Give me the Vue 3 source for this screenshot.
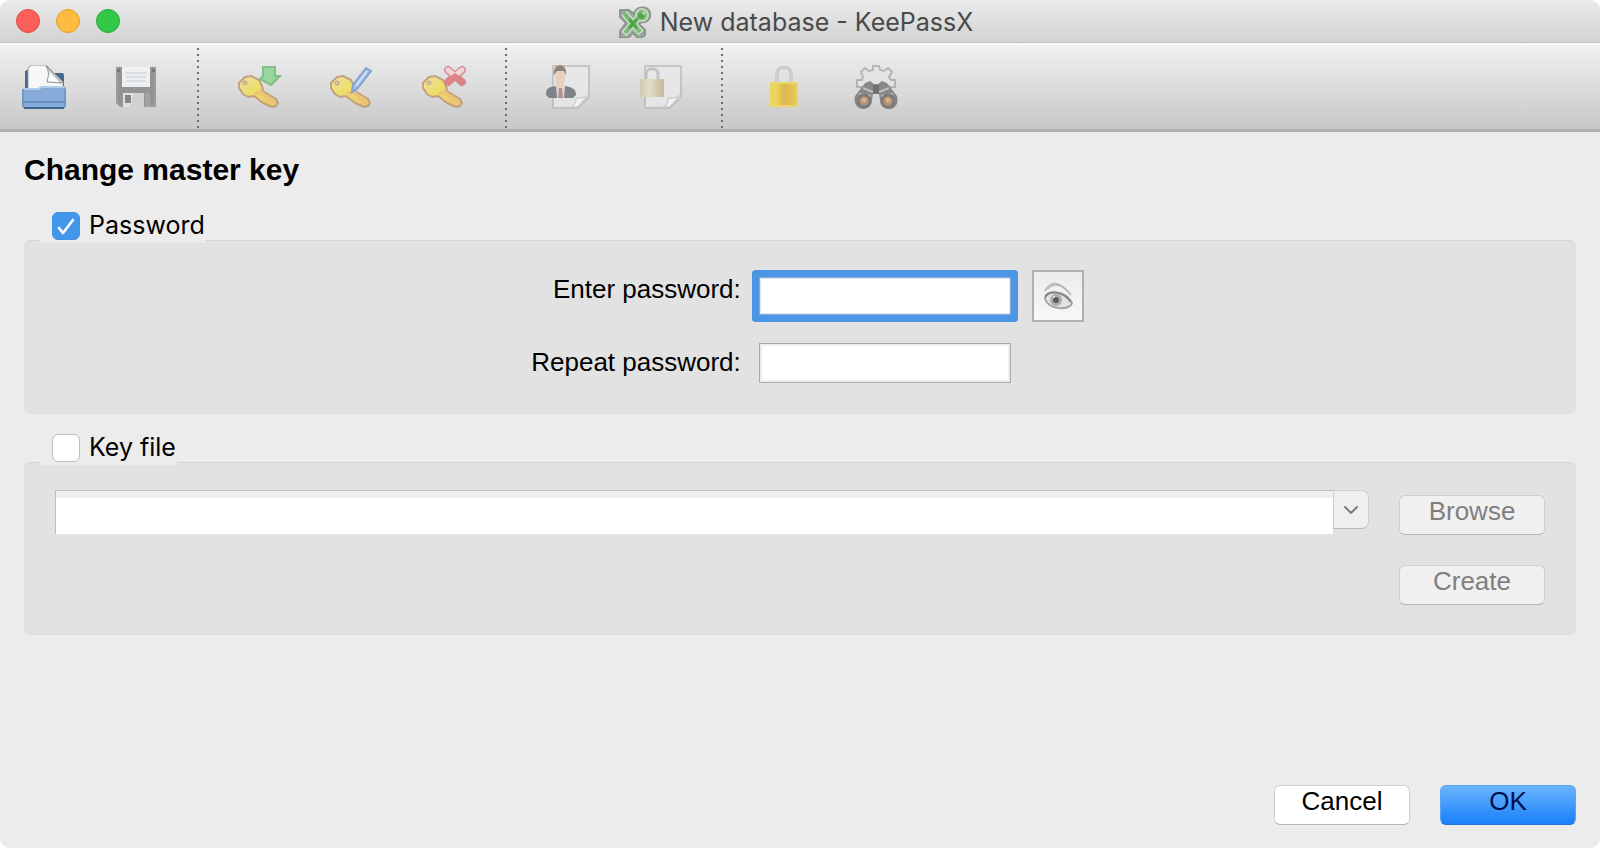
<template>
  <main class="window">
    <header class="titlebar">
      <div class="lights">
        <button
          v-for="light in lights"
          :key="light"
          type="button"
          :class="['light', light]"
          :aria-label="light"
        ></button>
      </div>
      <h1 class="title">
        <svg class="logo" viewBox="0 0 32 32" aria-hidden="true">
          <path
            d="M1 4h9l5 4c1-8 15-9 16-1 1 6-3 10-8 9l-3 2 6 6v5l-4 3h-3l-5-5-5 5H1v-7l6-8-6-6z"
            fill="#9aa99b"
            stroke="#8c968d"
            stroke-width="2"
            stroke-linejoin="round"
          />
          <path d="M5 7l17 20M5 28L21 10" stroke="#c6dec3" stroke-width="7" />
          <circle cx="23" cy="9" r="6" fill="#78b873" stroke="#c0dabd" stroke-width="2" />
          <path d="M5 7l16 19M6 27L20 11" stroke="#7cb877" stroke-width="4" />
          <path d="M10 13l8 9M10 22l8-9" stroke="#4fa548" stroke-width="3" />
          <circle cx="22" cy="10" r="3" fill="#4fa548" />
          <circle cx="25" cy="7" r="2" fill="#a9d2a5" />
        </svg>
        <span>New database - KeePassX</span>
      </h1>
    </header>

    <nav class="toolbar">
      <button type="button" class="tool" aria-label="Open database">
        <svg viewBox="0 0 44 44">
          <path d="M3 6l4-2v20H3zM30 8h11l1 2v14H30z" fill="#47698c" />
          <path d="M6 3l3-3h15l17 17v5H22l-5 3H6z" fill="#f7f7f7" stroke="#999" />
          <path d="M24 1c4 6 2 11 1 16l15 1z" fill="#dcdcdc" stroke="#8f9499" />
          <path d="M28 8l-2 8 11 1z" fill="#fff" />
          <path d="M0 25l2-2h15l2-2h23l2 2v18l-2 2H2l-2-2z" fill="#86abd9" />
          <path d="M1 24h16l2-2h23" stroke="#b2cdec" stroke-width="2" fill="none" />
          <path d="M0 37h44" stroke="#4a76ab" />
          <path d="M1 24v17l1 2h40l1-2V24" stroke="#5d85b8" fill="none" />
          <path d="M2 43h40" stroke="#3d6594" stroke-width="2" />
        </svg>
      </button>
      <button type="button" class="tool" aria-label="Save database" disabled>
        <svg viewBox="0 0 44 44">
          <path d="M2 2h40v40H6l-4-4z" fill="#939393" />
          <path d="M3 3v34l4 4h34V3" fill="none" stroke="#a5a5a5" />
          <path d="M8 2h28v20H8z" fill="#eff0f1" />
          <path d="M12 8h20M12 12h20M12 16h20" stroke="#c3ccd5" />
          <path d="M9 28h21v14H9z" fill="#e0e0e0" />
          <path d="M20 28h10v14H16z" fill="#d0d0d0" />
          <path d="M11 30h6v8h-6z" fill="#858585" />
          <path d="M3 4h3v3H3zM38 4h3v3h-3z" fill="#777" />
          <path d="M31 28h5v14h-5z" fill="#a3a3a3" />
        </svg>
      </button>
      <span class="separator"></span>

      <button
        v-for="action in keyActions"
        :key="action"
        type="button"
        class="tool faded"
        :aria-label="action + ' entry'"
        disabled
      >
        <svg viewBox="0 0 44 44">
          <path
            d="M1 18l6-6 6-1 8 4 3 6 1 5 13 8 2 4-2 3-4 1-9-4-9-7-6 1-5-3-4-6z"
            fill="url(#keyFill)"
            stroke="#bd9468"
            stroke-width="2"
            stroke-linejoin="round"
          />
          <path d="M17 29l6-2 13 10" fill="none" stroke="#f3bd5c" stroke-width="3" />
          <circle cx="7" cy="18" r="2" fill="#d9c795" stroke="#b3946c" />
          <path
            v-if="action === 'Add'"
            d="M25 2h12v9h5l-9 9-11-6 3-3z"
            fill="#85d48c"
            stroke="#6bb873"
            stroke-width="2"
          />
          <g v-else-if="action === 'Edit'">
            <path d="M36 3l5 3-14 18-5 3 1-7z" fill="#8fb6ec" stroke="#6f94cc" stroke-width="2" />
            <path d="M37 6L26 21" stroke="#cfe2fa" stroke-width="2" />
          </g>
          <g v-else>
            <path d="M26 5l14 12M40 5L26 17" stroke="#d2787f" stroke-width="8" stroke-linecap="round" />
            <path d="M26 5l5 4M40 5l-5 4" stroke="#f4d4d5" stroke-width="5" stroke-linecap="round" />
            <path d="M33 11l7 6M33 11l-7 6" stroke="#e06a70" stroke-width="5" stroke-linecap="round" />
          </g>
        </svg>
      </button>
      <span class="separator"></span>

      <button type="button" class="tool faded" aria-label="Copy username" disabled>
        <svg viewBox="0 0 44 44">
          <path d="M7 1h36v31L32 43H7z" fill="#e9e9e9" stroke="#bebebe" stroke-width="2" />
          <path d="M25 42c6-2 5-9 5-9s9 1 12-3L32 42z" fill="#f8f8f8" stroke="#bebebe" />
          <path d="M0 30c0-7 3-8 10-9h9c7 1 11 3 11 9l-3 3H3z" fill="#6a6e73" />
          <path d="M10 20h9l-1 13h-7z" fill="#ded9d7" />
          <path d="M13 23h3l1 10h-5z" fill="#b07c7c" />
          <path d="M9 8c0-6 11-6 11 0l-2 11-3 4h-2l-3-4z" fill="#e8cdb5" />
          <path d="M8 10c-2-13 14-13 12 0l-2-4h-7z" fill="#7d6b5a" />
        </svg>
      </button>
      <button type="button" class="tool faded" aria-label="Copy password" disabled>
        <svg viewBox="0 0 44 44">
          <path d="M7 1h36v31L32 43H7z" fill="#e9e9e9" stroke="#bebebe" stroke-width="2" />
          <path d="M25 42c6-2 5-9 5-9s9 1 12-3L32 42z" fill="#f8f8f8" stroke="#bebebe" />
          <path d="M8 15V9c0-7 12-7 12 0v6" fill="none" stroke="#bbb" stroke-width="3" />
          <path d="M2 14h24v18H2z" fill="url(#paleLock)" />
        </svg>
      </button>
      <span class="separator"></span>

      <button type="button" class="tool" aria-label="Lock databases" disabled>
        <svg viewBox="0 0 44 44">
          <path d="M15 18V9c0-9 14-9 14 0v9" fill="none" stroke="#bcbcbc" stroke-width="3" />
          <path d="M15 18V9c0-9 14-9 14 0v9" fill="none" stroke="#e0e0e0" />
          <rect x="8" y="17" width="28" height="25" rx="1" fill="url(#goldLock)" />
          <path d="M9 18h26v23H9z" fill="none" stroke="#ead765" stroke-width="2" />
        </svg>
      </button>
      <button type="button" class="tool faded" aria-label="Search" disabled>
        <svg viewBox="0 0 44 44">
          <path
            d="M19 1h6l1 4 4 1 4-3 4 4-3 5 2 3h4v7H3v-7h5l1-3-2-5 4-4 4 3 4-1z"
            fill="#e6e6e6"
            stroke="#aaa"
            stroke-width="2"
          />
          <path
            d="M11 18l5-2 4 3h4l4-3 5 2 10 13c2 8-2 13-8 13s-9-4-9-9l-1-6h-6l-1 6c0 5-4 9-9 9S-1 39 1 31z"
            fill="#747474"
          />
          <path d="M9 23l10 4M25 27l10-4M5 29l12 2M27 31l12-2" stroke="#b8b8b8" stroke-width="2" />
          <path d="M19 20h6v9h-6z" fill="#555" />
          <circle cx="10" cy="36" r="6" fill="#b9855a" stroke="#666" stroke-width="3" />
          <circle cx="34" cy="36" r="6" fill="#b9855a" stroke="#666" stroke-width="3" />
          <circle cx="10" cy="35" r="2" fill="#ddb084" />
          <circle cx="34" cy="35" r="2" fill="#ddb084" />
        </svg>
      </button>

      <!-- fills shared by the toolbar icons -->
      <svg class="defs" aria-hidden="true">
        <defs>
          <linearGradient id="keyFill" x1="0" y1="0" x2="1" y2="1">
            <stop offset="0" stop-color="#f3dfa0" />
            <stop offset="0.4" stop-color="#f3e050" />
            <stop offset="1" stop-color="#edba62" />
          </linearGradient>
          <linearGradient id="paleLock">
            <stop offset="0" stop-color="#d2c7a5" />
            <stop offset="0.4" stop-color="#e4dcc4" />
            <stop offset="1" stop-color="#c2b28a" />
          </linearGradient>
          <linearGradient id="goldLock">
            <stop offset="0" stop-color="#ead65e" />
            <stop offset="0.2" stop-color="#ecd65a" />
            <stop offset="0.5" stop-color="#ddb955" />
            <stop offset="1" stop-color="#e8cb50" />
          </linearGradient>
        </defs>
      </svg>
    </nav>

    <form class="content" @submit.prevent>
      <h2 class="heading">Change master key</h2>

      <section class="group">
        <label class="legend">
          <input v-model="usePassword" type="checkbox" />
          <span>Password</span>
        </label>
        <div class="box passwords">
          <label for="password">Enter password:</label>
          <input
            id="password"
            v-model="password"
            class="field active"
            :type="showPassword ? 'text' : 'password'"
          />
          <button
            type="button"
            class="reveal"
            aria-label="Show password"
            @click="showPassword = !showPassword"
          >
            <svg viewBox="0 0 30 28">
              <path d="M2 9C8-1 16-2 28 13" fill="none" stroke="#bbb" stroke-width="2" />
              <path d="M5 7c7-7 13-4 20 3" fill="none" stroke="#aaa" />
              <path
                d="M2 17c0-9 20-10 27 4-2 8-23 7-27-4z"
                fill="#e3e3e3"
                stroke="#a5a5a5"
                stroke-width="2"
              />
              <path d="M2 15c4-7 18-6 26 5" fill="none" stroke="#888" stroke-width="2" />
              <circle cx="13" cy="18" r="6" fill="#adadad" />
              <circle cx="13" cy="18" r="3" fill="#5c5c5c" />
              <circle cx="11" cy="15" r="1" fill="#eee" />
            </svg>
          </button>
          <label for="repeat">Repeat password:</label>
          <input
            id="repeat"
            v-model="repeat"
            class="field"
            :type="showPassword ? 'text' : 'password'"
          />
        </div>
      </section>

      <section class="group">
        <label class="legend">
          <input v-model="useKeyFile" type="checkbox" />
          <span>Key file</span>
        </label>
        <div class="box keyfile">
          <div class="combo">
            <input v-model="keyFile" type="text" aria-label="Key file path" :disabled="!useKeyFile" />
            <button type="button" aria-label="Recent key files" :disabled="!useKeyFile">
              <svg viewBox="0 0 16 10">
                <path
                  d="M2 2l6 6 6-6"
                  fill="none"
                  stroke="#7c7c7c"
                  stroke-width="2"
                  stroke-linecap="round"
                  stroke-linejoin="round"
                />
              </svg>
            </button>
          </div>
          <div class="actions">
            <button type="button" class="push" :disabled="!useKeyFile">Browse</button>
            <button type="button" class="push" :disabled="!useKeyFile">Create</button>
          </div>
        </div>
      </section>

      <footer class="footer">
        <button type="button" class="push">Cancel</button>
        <button type="submit" class="push primary">OK</button>
      </footer>
    </form>
  </main>
</template>

<script setup>
import { ref } from "vue";

const lights = ["close", "minimize", "zoom"];
const keyActions = ["Add", "Edit", "Delete"];

// master key form
const usePassword = ref(true);
const useKeyFile = ref(false);
const password = ref("");
const repeat = ref("");
const keyFile = ref("");
const showPassword = ref(false);
</script>

<style>
body {
  background: #fff;
}
</style>

<style scoped>
* {
  box-sizing: border-box;
}

.window {
  display: flex;
  flex-direction: column;
  min-height: 100vh;
  border-radius: 10px;
  overflow: hidden;
  background: #ececec;
  color: #000;
  font-family: "Liberation Sans", Arial, sans-serif;
  font-size: 26px;
}

button,
input {
  margin: 0;
  padding: 0;
  font: inherit;
  outline: none;
}

/* title bar */
.titlebar {
  display: grid;
  grid-template-columns: 1fr auto 1fr;
  align-items: center;
  height: 43px;
  padding: 0 16px;
  background: linear-gradient(#ebebeb, #d3d3d3);
  border-bottom: 1px solid #c0c0c0;
}

.lights {
  display: flex;
  gap: 16px;
}

.light {
  width: 24px;
  height: 24px;
  border: 1px solid #e14942;
  border-radius: 50%;
  background: #fc605c;
}

.light.minimize {
  background: #fdbc40;
  border-color: #dfa023;
}

.light.zoom {
  background: #34c84a;
  border-color: #27aa35;
}

.title {
  display: flex;
  align-items: center;
  gap: 9px;
  margin: 0;
  padding: 2px 8px 0 0;
  color: #4a4a4a;
  font-family: Inter, sans-serif;
  font-size: 25px;
  font-weight: 400;
}

.logo {
  width: 32px;
  height: 32px;
}

/* toolbar */
.toolbar {
  display: flex;
  align-items: center;
  gap: 4px;
  height: 89px;
  background: linear-gradient(#f0f0f0, #c8c8c8);
  border-top: 2px solid #fafafa;
  border-bottom: 3px solid #b0b0b0;
}

.tool {
  display: flex;
  justify-content: center;
  width: 88px;
  border: 0;
  background: none;
}

.tool svg {
  width: 44px;
  height: 44px;
}

.tool.faded svg {
  opacity: 0.8;
}

.separator {
  display: flex;
  align-self: stretch;
  justify-content: center;
  width: 28px;
  padding-top: 3px;
}

.separator::before {
  content: "";
  width: 2px;
  background: repeating-linear-gradient(#6e6e6e 0 2px, transparent 2px 6px);
}

.defs {
  width: 0;
  height: 0;
}

/* form */
.content {
  display: flex;
  flex: 1;
  flex-direction: column;
  padding: 20px 24px 23px;
}

.heading {
  margin: 0 0 4px;
  font-size: 30px;
  line-height: 36px;
}

.group {
  display: flex;
  flex-direction: column;
  margin-top: 17px;
}

.legend {
  display: flex;
  z-index: 1;
  align-items: center;
  align-self: flex-start;
  gap: 9px;
  height: 34px;
  margin: 0 0 -3px 16px;
  padding: 0 1px 0 12px;
  background: #ececec;
  font-family: Inter, sans-serif;
  font-size: 25px;
}

.legend span {
  padding-bottom: 2px;
}

.legend input {
  width: 28px;
  height: 28px;
  appearance: none;
  background: #fff;
  border: 1px solid #bdbdbd;
  border-radius: 6px;
}

.legend input:checked {
  background: #4297ea
    url('data:image/svg+xml,<svg xmlns="http://www.w3.org/2000/svg" viewBox="0 0 26 26"><path d="M6 15l4 5L20 7" fill="none" stroke="white" stroke-width="2.6" stroke-linecap="round" stroke-linejoin="round"/></svg>');
  border-color: #3f92e4;
}

.box {
  background: #e2e2e2;
  border: 1px solid #dedede;
  border-top-color: #d4d4d4;
  border-radius: 7px;
}

.passwords {
  display: grid;
  grid-template-columns: auto 252px 52px;
  justify-content: center;
  align-items: center;
  column-gap: 18px;
  row-gap: 21px;
  padding: 29px 0 30px 12px;
}

.passwords label {
  align-self: start;
  line-height: 38px;
  text-align: right;
}

.field {
  height: 40px;
  padding: 0 6px;
  background: #fff;
  border: 1px solid #a9a9a9;
  box-shadow: inset 0 0 0 2px #ededed;
}

.field.active {
  height: 38px;
  border-color: #8aabd3;
  border-radius: 1px;
  box-shadow: inset 0 0 0 1px #dce9f8, 0 0 0 7px #4c96e3;
}

.reveal {
  display: flex;
  align-items: center;
  justify-content: center;
  width: 52px;
  height: 52px;
  margin-left: 3px;
  background: linear-gradient(#ececec, #f8f8f8);
  border: 2px solid #b0b0b0;
}

.reveal svg {
  width: 30px;
  height: 28px;
}

.keyfile {
  display: flex;
  align-items: flex-start;
  gap: 30px;
  padding: 27px 30px 29px 30px;
}

.combo {
  display: flex;
  flex: 1;
  align-items: flex-start;
}

.combo input {
  flex: 1;
  min-width: 0;
  height: 44px;
  padding: 8px 6px 0;
  background: linear-gradient(#eee 7px, #fff 7px);
  border: solid #c0c0c0;
  border-width: 1px 0 0 1px;
}

.combo button {
  display: flex;
  align-items: center;
  justify-content: center;
  width: 36px;
  height: 39px;
  background: #efefef;
  border: 1px solid #d0d0d0;
  border-bottom-color: #bdbdbd;
  border-radius: 0 7px 7px 0;
}

.combo svg {
  width: 16px;
  height: 10px;
}

.actions {
  display: flex;
  flex-direction: column;
  gap: 30px;
  padding-top: 5px;
}

.push {
  min-width: 136px;
  height: 40px;
  padding: 0 20px 8px;
  background: #fff;
  border: 1px solid #cfcfcf;
  border-bottom-color: #b5b5b5;
  border-radius: 6px;
  color: #000;
  line-height: 30px;
}

.actions .push {
  min-width: 146px;
}

.push:disabled {
  background: #f0f0f0;
  color: #7f7f7f;
}

.push.primary {
  background: linear-gradient(#69b4fb, #1a80fc);
  border-color: #5aa6f3;
  border-bottom-color: #2272d8;
  color: #000d4d;
}

.footer {
  display: flex;
  justify-content: flex-end;
  gap: 30px;
  margin-top: auto;
}
</style>
